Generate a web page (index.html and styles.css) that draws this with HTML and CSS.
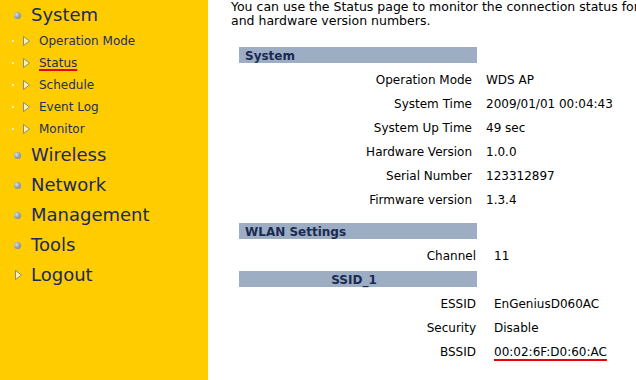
FILE: index.html
```html
<!DOCTYPE html>
<html>
<head>
<meta charset="utf-8">
<link rel="stylesheet" href="styles.css">
</head>
<body>
<div class="page">
  <nav class="sidebar">
    <ul class="menu">
      <li class="main-item"><span class="ball"></span><span>System</span></li>
      <li class="sub-item"><span class="dot"></span><svg class="tri" width="7" height="10" viewBox="0 0 7 10"><path d="M0.5 0.5 L6.5 5 L0.5 9.5 Z" fill="#fff2a8" stroke="#8d8a86" stroke-width="1"/></svg><span>Operation Mode</span></li>
      <li class="sub-item"><span class="dot"></span><svg class="tri" width="7" height="10" viewBox="0 0 7 10"><path d="M0.5 0.5 L6.5 5 L0.5 9.5 Z" fill="#fff2a8" stroke="#8d8a86" stroke-width="1"/></svg><span class="marked">Status</span></li>
      <li class="sub-item"><span class="dot"></span><svg class="tri" width="7" height="10" viewBox="0 0 7 10"><path d="M0.5 0.5 L6.5 5 L0.5 9.5 Z" fill="#fff2a8" stroke="#8d8a86" stroke-width="1"/></svg><span>Schedule</span></li>
      <li class="sub-item"><span class="dot"></span><svg class="tri" width="7" height="10" viewBox="0 0 7 10"><path d="M0.5 0.5 L6.5 5 L0.5 9.5 Z" fill="#fff2a8" stroke="#8d8a86" stroke-width="1"/></svg><span>Event Log</span></li>
      <li class="sub-item"><span class="dot"></span><svg class="tri" width="7" height="10" viewBox="0 0 7 10"><path d="M0.5 0.5 L6.5 5 L0.5 9.5 Z" fill="#fff2a8" stroke="#8d8a86" stroke-width="1"/></svg><span>Monitor</span></li>
      <li class="main-item"><span class="ball"></span><span>Wireless</span></li>
      <li class="main-item"><span class="ball"></span><span>Network</span></li>
      <li class="main-item"><span class="ball"></span><span>Management</span></li>
      <li class="main-item"><span class="ball"></span><span>Tools</span></li>
      <li class="main-item logout"><svg class="tri" width="7" height="10" viewBox="0 0 7 10"><path d="M0.5 0.5 L6.5 5 L0.5 9.5 Z" fill="#fff2a8" stroke="#8d8a86" stroke-width="1"/></svg><span>Logout</span></li>
    </ul>
  </nav>
  <main class="content">
    <p class="intro">You can use the Status page to monitor the connection status for the WLAN/LAN interfaces, firmware<br>and hardware version numbers.</p>

    <section class="block block-system">
      <div class="bar">System</div>
      <div class="rows">
        <div class="label">Operation Mode</div><div class="value">WDS AP</div>
        <div class="label">System Time</div><div class="value">2009/01/01 00:04:43</div>
        <div class="label">System Up Time</div><div class="value">49 sec</div>
        <div class="label">Hardware Version</div><div class="value">1.0.0</div>
        <div class="label">Serial Number</div><div class="value">123312897</div>
        <div class="label">Firmware version</div><div class="value">1.3.4</div>
      </div>
    </section>

    <section class="block block-wlan">
      <div class="bar">WLAN Settings</div>
      <div class="rows rows-wide">
        <div class="label">Channel</div><div class="value">11</div>
      </div>
      <div class="bar bar-center">SSID_1</div>
      <div class="rows rows-wide">
        <div class="label">ESSID</div><div class="value">EnGeniusD060AC</div>
        <div class="label">Security</div><div class="value">Disable</div>
        <div class="label">BSSID</div><div class="value"><span class="marked marked-value">00:02:6F:D0:60:AC</span></div>
      </div>
    </section>
  </main>
</div>
</body>
</html>
```

FILE: styles.css
```css
html, body {
  margin: 0;
  padding: 0;
  background: #ffffff;
  overflow: hidden;
}

body {
  font-family: "DejaVu Sans", Verdana, sans-serif;
  width: 636px;
  height: 380px;
}

.page {
  display: flex;
  height: 380px;
}

/* ---------- sidebar ---------- */
.sidebar {
  width: 208px;
  flex: none;
  background: #ffcc00;
  height: 100%;
}

.menu {
  list-style: none;
  margin: 0;
  padding: 0;
}

.main-item {
  display: flex;
  align-items: center;
  height: 30px;
  line-height: 30px;
  padding-left: 14px;
  font-size: 18px;
  color: #1b2a58;
}

.ball {
  width: 7px;
  height: 7px;
  border-radius: 50%;
  background: radial-gradient(circle at 35% 35%, #d6dde6 0%, #9aa6b6 45%, #6a7a90 100%);
  margin-right: 10px;
  flex: none;
}

.logout {
  padding-left: 15px;
}

.logout .tri {
  margin-right: 9px;
}

.sub-item {
  display: flex;
  align-items: center;
  height: 22px;
  line-height: 22px;
  padding-left: 12px;
  font-size: 12px;
  color: #22305a;
}

.dot {
  width: 2px;
  height: 2px;
  background: #fff3b0;
  margin-right: 9px;
  flex: none;
}

.tri {
  display: block;
  flex: none;
  margin-right: 9px;
}

.marked {
  text-decoration: underline;
  text-decoration-color: #e8000a;
  text-decoration-thickness: 2px;
  text-underline-offset: 2px;
}

/* ---------- content ---------- */
.content {
  flex: none;
  width: 700px;
  padding-left: 23px;
  font-size: 12px;
  color: #000000;
}

.intro {
  margin: 0;
  font-size: 12.5px;
  line-height: 14px;
  white-space: nowrap;
}

.block {
  margin-left: 8px;
  width: 400px;
}

.block-system {
  margin-top: 19px;
}

.block-wlan {
  margin-top: 11px;
}

.bar {
  width: 232px;
  height: 14px;
  padding: 2px 0 0 6px;
  line-height: 14px;
  background: #9dadc4;
  color: #1a2a52;
  font-weight: bold;
  font-size: 12px;
}

.bar-center {
  text-align: center;
  width: 218px;
  padding-right: 14px;
  margin-top: 3px;
}

.rows {
  display: grid;
  grid-template-columns: 238px auto;
  grid-auto-rows: 24px;
  line-height: 24px;
  margin-top: 5px;
}

.rows .label {
  text-align: right;
  padding-right: 5px;
}

.rows .value {
  padding-left: 9px;
  white-space: nowrap;
}

.rows-wide .label {
  padding-right: 1px;
}

.rows-wide .value {
  padding-left: 17px;
}

.marked-value {
  text-underline-offset: 3px;
}
```
